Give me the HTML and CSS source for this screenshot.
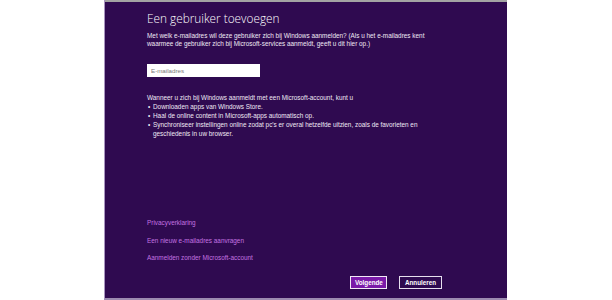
FILE: index.html
```html
<!DOCTYPE html>
<html lang="nl">
<head>
<meta charset="utf-8">
<title>Een gebruiker toevoegen</title>
<link rel="stylesheet" href="styles.css">
</head>
<body>
<div class="dialog">
  <div class="topbar"></div>
  <div class="content">
    <h1 class="title">Een gebruiker toevoegen</h1>
    <p class="intro">Met welk e-mailadres wil deze gebruiker zich bij Windows aanmelden? (Als u het e-mailadres kent<br>waarmee de gebruiker zich bij Microsoft-services aanmeldt, geeft u dit hier op.)</p>
    <div class="field"><span class="placeholder">E-mailadres</span></div>
    <p class="lead">Wanneer u zich bij Windows aanmeldt met een Microsoft-account, kunt u</p>
    <ul class="bullets">
      <li>Downloaden apps van Windows Store.</li>
      <li>Haal de online content in Microsoft-apps automatisch op.</li>
      <li>Synchroniseer instellingen online zodat pc's er overal hetzelfde uitzien, zoals de favorieten en<br>geschiedenis in uw browser.</li>
    </ul>
    <div class="links">
      <a class="link">Privacyverklaring</a>
      <a class="link">Een nieuw e-mailadres aanvragen</a>
      <a class="link">Aanmelden zonder Microsoft-account</a>
    </div>
    <div class="buttons">
      <button class="btn btn-primary">Volgende</button>
      <button class="btn">Annuleren</button>
    </div>
  </div>
</div>
</body>
</html>
```
FILE: styles.css
```css
html, body {
  margin: 0;
  padding: 0;
  background: #ffffff;
}
body {
  width: 612px;
  height: 300px;
  overflow: hidden;
  font-family: "Liberation Sans", Arial, sans-serif;
}
.dialog {
  margin-left: 104px;
  width: 403px;
  height: 300px;
  box-sizing: border-box;
  background: #2f0a50;
  border-left: 1px solid #a995c0;
  border-bottom: 2px solid #9c8bb0;
  display: flex;
  flex-direction: column;
}
.topbar {
  height: 2px;
  background: #a3a3a3;
}
.content {
  padding-left: 42px;
  padding-right: 65px;
  display: flex;
  flex-direction: column;
  color: #efe9f4;
}
.title {
  margin: 9px 0 0 0;
  font-family: "Open Sans", "Noto Sans", sans-serif;
  font-weight: 300;
  font-size: 11.8px;
  line-height: 14px;
  color: #ffffff;
}
.intro {
  margin: 7px 0 0 0;
  font-size: 6.4px;
  line-height: 8px;
  white-space: nowrap;
}
.field {
  margin-top: 16px;
  width: 113px;
  height: 13px;
  box-sizing: border-box;
  background: #ffffff;
  padding-left: 4px;
  display: flex;
  align-items: center;
}
.placeholder {
  font-size: 6.2px;
  color: #7a7a7a;
}
.lead {
  margin: 16px 0 0 0;
  font-size: 6.4px;
  line-height: 9px;
  white-space: nowrap;
}
.bullets {
  margin: 0;
  padding: 0;
  list-style: none;
  font-size: 6.4px;
  line-height: 9px;
  white-space: nowrap;
}
.bullets li {
  position: relative;
  padding-left: 6px;
}
.bullets li::before {
  content: "\2022";
  position: absolute;
  left: 1px;
  top: 0;
}
.links {
  margin-top: 80px;
  display: flex;
  flex-direction: column;
  gap: 8.5px;
}
.link {
  font-size: 6.4px;
  line-height: 9px;
  color: #c473e0;
}
.buttons {
  margin-top: 14px;
  display: flex;
  justify-content: flex-end;
  gap: 12px;
}
.btn {
  height: 13px;
  box-sizing: border-box;
  padding: 0 4px;
  border: 1px solid #e6dfee;
  background: transparent;
  color: #ffffff;
  font-family: "Liberation Sans", Arial, sans-serif;
  font-size: 6.3px;
  font-weight: bold;
  line-height: 11px;
}
.btn-primary {
  width: 37px;
  background: #7a1aa8;
  border-color: #f2eaf7;
}
.btn + .btn {
  width: 43px;
}
```
